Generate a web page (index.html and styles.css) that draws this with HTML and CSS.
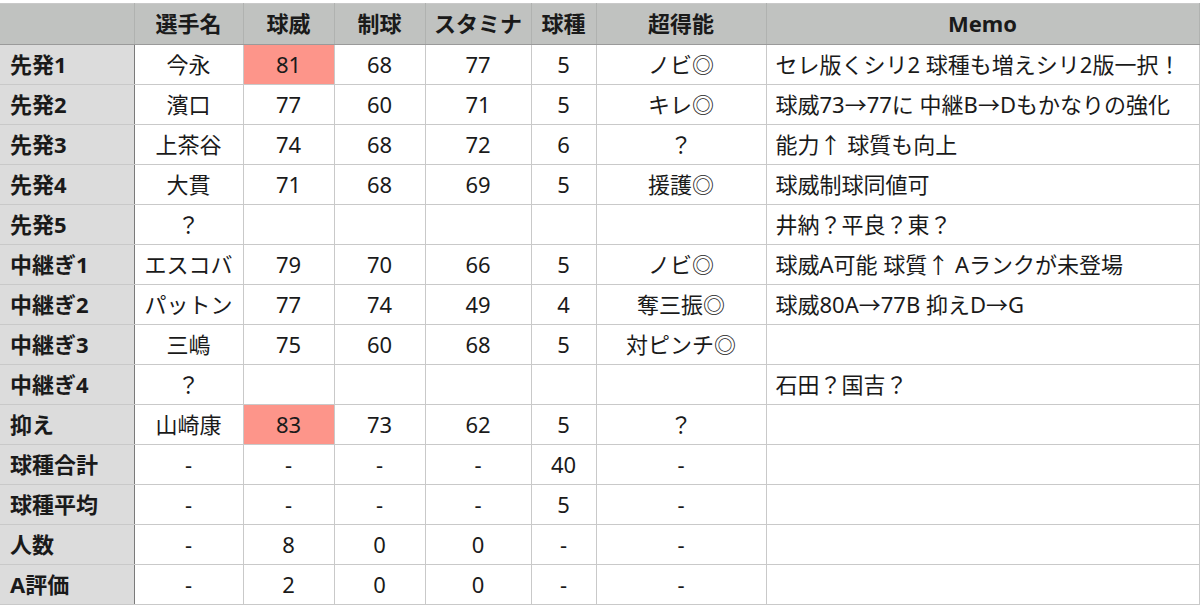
FILE: index.html
```html
<!DOCTYPE html>
<html lang="ja">
<head>
<meta charset="utf-8">
<link rel="stylesheet" href="styles.css">
</head>
<body>
<table class="sheet">
  <colgroup>
    <col class="c-label"><col class="c-name"><col class="c-num"><col class="c-num"><col class="c-stam"><col class="c-kind"><col class="c-skill"><col class="c-memo">
  </colgroup>
  <thead>
    <tr>
      <th class="corner"></th><th>選手名</th><th>球威</th><th>制球</th><th>スタミナ</th><th>球種</th><th>超得能</th><th>Memo</th>
    </tr>
  </thead>
  <tbody>
    <tr><th>先発1</th><td>今永</td><td class="hot">81</td><td>68</td><td>77</td><td>5</td><td>ノビ◎</td><td class="memo">セレ版くシリ2 球種も増えシリ2版一択！</td></tr>
    <tr><th>先発2</th><td>濱口</td><td>77</td><td>60</td><td>71</td><td>5</td><td>キレ◎</td><td class="memo">球威73<span class="sym">→</span>77に 中継B<span class="sym">→</span>Dもかなりの強化</td></tr>
    <tr><th>先発3</th><td>上茶谷</td><td>74</td><td>68</td><td>72</td><td>6</td><td>？</td><td class="memo">能力<span class="sym">↑</span> 球質も向上</td></tr>
    <tr><th>先発4</th><td>大貫</td><td>71</td><td>68</td><td>69</td><td>5</td><td>援護◎</td><td class="memo">球威制球同値可</td></tr>
    <tr><th>先発5</th><td>？</td><td></td><td></td><td></td><td></td><td></td><td class="memo">井納？平良？東？</td></tr>
    <tr><th>中継ぎ1</th><td>エスコバ</td><td>79</td><td>70</td><td>66</td><td>5</td><td>ノビ◎</td><td class="memo">球威A可能 球質<span class="sym">↑</span> Aランクが未登場</td></tr>
    <tr><th>中継ぎ2</th><td>パットン</td><td>77</td><td>74</td><td>49</td><td>4</td><td>奪三振◎</td><td class="memo">球威80A<span class="sym">→</span>77B 抑えD<span class="sym">→</span>G</td></tr>
    <tr><th>中継ぎ3</th><td>三嶋</td><td>75</td><td>60</td><td>68</td><td>5</td><td>対ピンチ◎</td><td class="memo"></td></tr>
    <tr><th>中継ぎ4</th><td>？</td><td></td><td></td><td></td><td></td><td></td><td class="memo">石田？国吉？</td></tr>
    <tr><th>抑え</th><td>山崎康</td><td class="hot">83</td><td>73</td><td>62</td><td>5</td><td>？</td><td class="memo"></td></tr>
    <tr><th>球種合計</th><td>-</td><td>-</td><td>-</td><td>-</td><td>40</td><td>-</td><td class="memo"></td></tr>
    <tr><th>球種平均</th><td>-</td><td>-</td><td>-</td><td>-</td><td>5</td><td>-</td><td class="memo"></td></tr>
    <tr><th>人数</th><td>-</td><td>8</td><td>0</td><td>0</td><td>-</td><td>-</td><td class="memo"></td></tr>
    <tr><th>A評価</th><td>-</td><td>2</td><td>0</td><td>0</td><td>-</td><td>-</td><td class="memo"></td></tr>
  </tbody>
</table>
</body>
</html>
```
FILE: styles.css
```css
html, body {
  margin: 0;
  padding: 0;
  background: #ffffff;
}

body {
  padding-top: 3px;
  font-family: "Noto Sans", "Noto Sans CJK JP", sans-serif;
  color: #1a1a1a;
}

.sheet {
  border-collapse: collapse;
  table-layout: fixed;
  width: 1199px;
  font-size: 22px;
}

.c-label { width: 134px; }
.c-name { width: 109px; }
.c-num { width: 91px; }
.c-stam { width: 106px; }
.c-kind { width: 65px; }
.c-skill { width: 170px; }
.c-memo { width: 433px; }

.sheet th,
.sheet td {
  border: 1px solid #c9c9c9;
  padding: 0 0 2px 0;
  height: 37px;
  line-height: 1;
  text-align: center;
  white-space: nowrap;
  overflow: hidden;
}

.sheet thead th {
  background: #c0c2c0;
  font-weight: bold;
  height: 38px;
  border-top-color: #c9c9c9;
  border-bottom: 1px solid #9a9a9a;
  border-left-color: #b0b2b0;
  border-right-color: #b0b2b0;
}

.sheet thead th.corner {
  border-left: none;
}

.sheet tbody th {
  background: #dcdcdc;
  font-weight: bold;
  text-align: left;
  padding-left: 10px;
  border-left: none;
  border-right: 1px solid #7a7a7a;
}

.sheet td.hot {
  background: #fd958a;
}

.sheet td.memo {
  text-align: left;
  padding-left: 9px;
}

.sym {
  font-family: "Noto Sans CJK JP", sans-serif;
}
```
